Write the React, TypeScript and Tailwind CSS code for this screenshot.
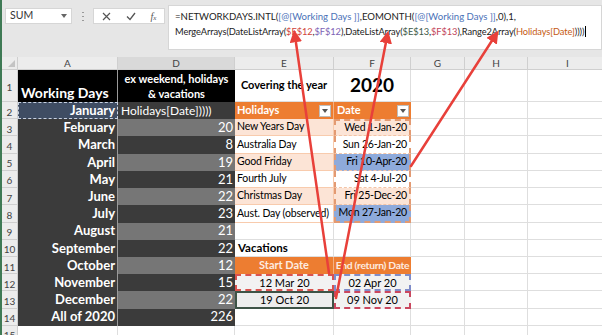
import React from "react";

const months: [string, string][] = [
  ["January", "Holidays[Date]))))"],
  ["February", "20"],
  ["March", "8"],
  ["April", "19"],
  ["May", "21"],
  ["June", "22"],
  ["July", "23"],
  ["August", "21"],
  ["September", "22"],
  ["October", "12"],
  ["November", "15"],
  ["December", "22"],
  ["All of 2020", "226"],
];

const holidays: [string, string][] = [
  ["New Years Day", "Wed 1-Jan-20"],
  ["Australia Day", "Sun 26-Jan-20"],
  ["Good Friday", "Fri 10-Apr-20"],
  ["Fourth July", "Sat 4-Jul-20"],
  ["Christmas Day", "Fri 25-Dec-20"],
  ["Aust. Day (observed)", "Mon 27-Jan-20"],
];

function Caret() {
  return (
    <span className="ml-auto mr-[2px] flex h-[12px] w-[12px] shrink-0 items-center justify-center border border-[#bdbdbd] bg-white">
      <svg width="6" height="4" viewBox="0 0 6 4">
        <path d="M0 0 L6 0 L3 4 Z" fill="#555" />
      </svg>
    </span>
  );
}

function RowHead({ n }: { n: number }) {
  return (
    <div className="flex items-center justify-center border-b border-r border-[#cfcfcf] bg-[#ececec] pt-[3px] text-[10px] leading-none text-[#444]">
      {n}
    </div>
  );
}

const grid = "border-b border-r border-[#dedede] bg-white";

export default function App() {
  return (
    <div className="relative h-[335px] w-[602px] overflow-hidden border-l-2 border-[#3f7a55] bg-[#e6e6e6] font-[Lato,'Open_Sans',sans-serif]">
      {/* formula bar */}
      <div className="flex h-[57px] items-start pt-[5px]">
        <div className="ml-[3px] mt-[3px] flex h-[16px] w-[67px] shrink-0 items-center border border-[#d6d6d6] bg-white pl-[4px] pr-[4px] text-[10.5px] text-[#333]">
          SUM
          <svg className="ml-auto" width="6" height="4" viewBox="0 0 6 4">
            <path d="M0 0 L6 0 L3 4 Z" fill="#666" />
          </svg>
        </div>
        <div className="ml-[10px] mt-[7px] flex h-[9px] shrink-0 flex-col justify-between">
          <span className="h-[1px] w-[2px] bg-[#999]" />
          <span className="h-[1px] w-[2px] bg-[#999]" />
          <span className="h-[1px] w-[2px] bg-[#999]" />
        </div>
        <div className="ml-[9px] mt-[3px] flex h-[16px] w-[72px] shrink-0 items-center justify-around border border-[#d6d6d6] bg-white text-[#555]">
          <svg width="9" height="9" viewBox="0 0 9 9">
            <path d="M1 1 L8 8 M8 1 L1 8" stroke="#555" strokeWidth="1.2" />
          </svg>
          <svg width="10" height="9" viewBox="0 0 10 9">
            <path d="M1 4.5 L4 7.5 L9 1" stroke="#555" strokeWidth="1.3" fill="none" />
          </svg>
          <span className="font-['Liberation_Serif',serif] text-[10px] italic text-[#555]">
            f<span className="text-[7px]">x</span>
          </span>
        </div>
        <div className="ml-[3px] h-[45px] min-w-0 flex-1 overflow-hidden whitespace-nowrap border border-[#d6d6d6] bg-white pl-[6px] pt-[4px] text-[9.6px] leading-[14px] text-[#222]">
          <div>
            =NETWORKDAYS.INTL(<span className="text-[#4a72b8]">[@[Working Days ]]</span>,EOMONTH(
            <span className="text-[#4a72b8]">[@[Working Days ]]</span>,0),1,
          </div>
          <div className="text-[9.3px] tracking-[-0.1px]">
            MergeArrays(DateListArray(<span className="text-[#d0423a]">$E$12</span>,
            <span className="text-[#7d63b5]">$F$12</span>),DateListArray(
            <span className="text-[#3d5a48]">$E$13</span>,<span className="text-[#c2455a]">$F$13</span>
            ),Range2Array(<span className="text-[#c55a11]">Holidays[Date]</span>))))
            <span className="ml-[1px] inline-block h-[11px] w-[1px] translate-y-[2px] bg-black" />
          </div>
        </div>
      </div>

      {/* sheet grid */}
      <div className="grid grid-cols-[16px_100px_117px_99px_77px_54px_63px_80px] grid-rows-[13px_32px_repeat(14,17.23px)] whitespace-nowrap text-[11px]">
        {/* column headers */}
        <div className="relative border-b border-r border-[#cfcfcf] bg-[#ececec]">
          <svg className="absolute bottom-[2px] right-[2px]" width="7" height="7" viewBox="0 0 7 7">
            <path d="M7 0 L7 7 L0 7 Z" fill="#c4c4c4" />
          </svg>
        </div>
        {["A", "D", "E", "F", "G", "H", "I"].map((c) => (
          <div
            key={c}
            className={`flex items-center justify-center border-b border-r border-[#cfcfcf] text-[10px] leading-none text-[#444] ${
              c === "D" ? "bg-[#d9d9d9]" : "bg-[#ececec]"
            }`}
          >
            {c}
          </div>
        ))}

        {/* row 1 */}
        <RowHead n={1} />
        <div className="flex items-end border-r border-[#9a9a9a] bg-black pb-[1px] pl-[3px] text-[14px] font-bold leading-tight text-white">
          Working Days
        </div>
        <div className="flex flex-col items-center justify-center bg-black text-[11px] font-bold leading-[15px] text-white">
          <span>ex weekend, holidays</span>
          <span>&amp; vacations</span>
        </div>
        <div className={`${grid} flex items-center justify-center text-[11px] font-bold text-black`}>Covering the year</div>
        <div className={`${grid} flex items-center justify-center text-[19px] font-bold text-black`}>2020</div>
        <div className={grid} />
        <div className={grid} />
        <div className={grid} />

        {/* rows 2-14 */}
        {months.map(([m, d], i) => {
          const r = i + 2;
          const light = r % 2 === 1;
          let e: React.ReactNode = <div className={grid} />;
          let f: React.ReactNode = <div className={grid} />;
          if (r === 2) {
            e = (
              <div className="flex items-center border-r border-[#f4b183] bg-[#ed7d31] pl-[2px] text-[11px] font-bold text-white">
                Holidays
                <Caret />
              </div>
            );
            f = (
              <div className="flex items-center bg-[#ed7d31] pl-[3px] text-[11px] font-bold text-white">
                Date
                <Caret />
              </div>
            );
          } else if (r >= 3 && r <= 8) {
            const [hn, hd] = holidays[r - 3];
            const peach = r % 2 === 1;
            const blue = r === 5 || r === 8;
            e = (
              <div
                className={`flex items-center overflow-hidden border-b border-r border-[#f8cbad] pl-[2px] text-[10.5px] tracking-[-0.15px] text-black ${
                  peach ? "bg-[#fce4d6]" : "bg-white"
                }`}
              >
                {hn}
              </div>
            );
            f = (
              <div
                className={`flex items-center justify-end overflow-hidden border-x-2 border-dashed border-[#e39a72] pr-[2px] text-[10.5px] tracking-[-0.2px] text-black ${
                  blue ? "bg-[#8eaadb]" : peach ? "bg-[#fce4d6]" : "bg-white"
                } ${r === 3 ? "border-t-2" : ""} ${r === 8 ? "border-b-2" : "border-b border-b-[#f3c4a6]"}`}
              >
                {hd}
              </div>
            );
          } else if (r === 10) {
            e = <div className={`${grid} flex items-end pl-[3px] text-[11.5px] font-bold text-black`}>Vacations</div>;
          } else if (r === 11) {
            e = (
              <div className="flex items-center justify-center border-r border-[#f4b183] bg-[#ed7d31] text-[11px] font-bold text-[#fdebe0]">
                Start Date
              </div>
            );
            f = (
              <div className="flex items-center justify-center overflow-hidden bg-[#ed7d31] text-[10.3px] font-bold tracking-[-0.3px] text-[#fdebe0]">
                End (return) Date
              </div>
            );
          } else if (r === 12) {
            e = (
              <div className="flex items-center justify-center border-2 border-dashed border-[#d9534f] bg-[#f2f2f2] text-[11px] text-black">
                12 Mar 20
              </div>
            );
            f = (
              <div className="flex items-center justify-center border-2 border-dashed border-[#7f8cc9] bg-[#f2f2f2] text-[11px] text-black">
                02 Apr 20
              </div>
            );
          } else if (r === 13) {
            e = (
              <div className="flex items-center justify-center border-2 border-[#3e5346] bg-[#ededed] text-[11px] text-black">
                19 Oct 20
              </div>
            );
            f = (
              <div className="flex items-center justify-center border-2 border-dashed border-[#c9485f] bg-[#f2f2f2] text-[11px] text-black">
                09 Nov 20
              </div>
            );
          }
          return (
            <React.Fragment key={m}>
              <RowHead n={r} />
              <div
                className={`flex items-center justify-end pr-[2px] text-[13px] font-bold text-white ${
                  r === 2 ? "border border-dashed border-[#c9d3e3] bg-[#3f4d63]" : "border-r border-[#9a9a9a] bg-[#3b3b3b]"
                }`}
              >
                {m}
              </div>
              {r === 2 ? (
                <div className="flex items-center overflow-hidden bg-[#3b3b3b] pl-[3px] text-[12px] text-white">{d}</div>
              ) : (
                <div
                  className={`flex items-center justify-end pr-[2px] text-[13px] text-white ${
                    light ? "bg-[#767676]" : "bg-[#3b3b3b]"
                  }`}
                >
                  {d}
                </div>
              )}
              {e}
              {f}
              <div className={grid} />
              <div className={grid} />
              <div className={grid} />
            </React.Fragment>
          );
        })}
        <RowHead n={15} />
        <div className={grid} />
        <div className={grid} />
        <div className={grid} />
        <div className={grid} />
        <div className={grid} />
        <div className={grid} />
        <div className={grid} />
      </div>

      {/* arrows */}
      <svg className="pointer-events-none absolute left-0 top-0" width="602" height="335" viewBox="0 0 602 335">
        <defs>
          <marker id="ah" markerWidth="5" markerHeight="5" refX="2.5" refY="2.5" orient="auto-start-reverse" markerUnits="strokeWidth">
            <path d="M0 0 L5 2.5 L0 5 Z" fill="#e8403a" />
          </marker>
        </defs>
        <g stroke="#e8403a" strokeWidth="2.5" strokeLinecap="round" fill="none">
          <line x1="293" y1="36" x2="327" y2="273" markerStart="url(#ah)" />
          <line x1="385" y1="37" x2="334" y2="298" markerStart="url(#ah)" />
          <line x1="493" y1="36" x2="409" y2="166" markerStart="url(#ah)" />
        </g>
      </svg>
    </div>
  );
}
